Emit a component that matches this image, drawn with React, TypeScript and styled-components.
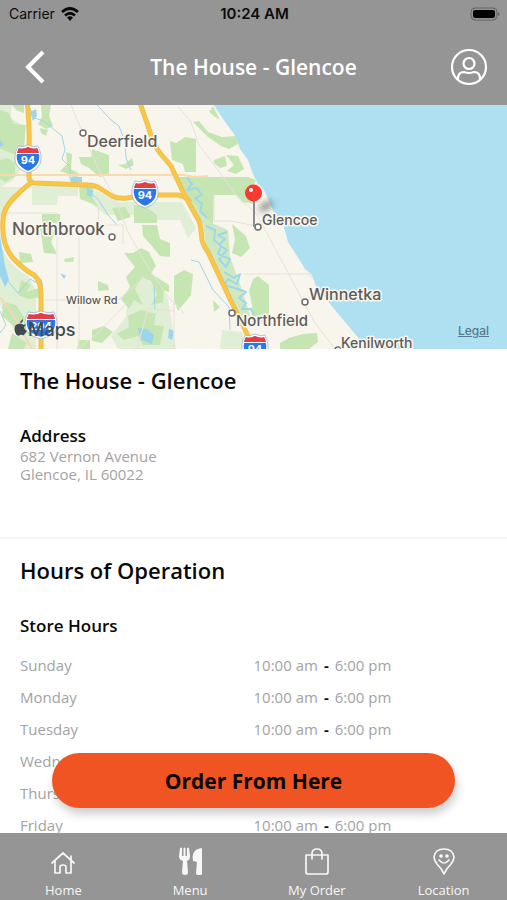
import React from "react";
import styled, { createGlobalStyle } from "styled-components";

const brandFont = `"Open Sans", "Noto Sans", sans-serif`;
const systemFont = `Inter, "Liberation Sans", sans-serif`;

const GlobalStyle = createGlobalStyle`
  *, *::before, *::after { box-sizing: border-box; }
  body { margin: 0; background: #fff; }
`;

const Screen = styled.div`
  height: 100vh;
  display: flex;
  flex-direction: column;
  background: #fff;
  color: #090909;
  font-family: ${brandFont};
`;

const Header = styled.header`
  flex: none;
  background: #959595;
  color: #fff;
`;

const StatusBar = styled.div`
  display: grid;
  grid-template-columns: 1fr auto 1fr;
  align-items: center;
  height: 28px;
  padding: 0 7px 0 9px;
  color: #0c0c0c;
  font: 500 14px/20px ${systemFont};
`;

const Carrier = styled.div`
  display: flex;
  align-items: center;
  gap: 6px;
  font-weight: 400;
`;

const Clock = styled.div`
  font-size: 15px;
  font-weight: 600;
`;

const Battery = styled.svg`
  justify-self: end;
`;

const TitleBar = styled.div`
  display: grid;
  grid-template-columns: 60px 1fr 60px;
  align-items: center;
  height: 77px;
  padding: 0 8px;
`;

const HeaderTitle = styled.h1`
  margin: 0;
  text-align: center;
  font-size: 21px;
  line-height: 28px;
  font-weight: 600;
`;

const IconButton = styled.button`
  display: flex;
  align-items: center;
  justify-content: center;
  height: 56px;
  padding: 0;
  border: 0;
  background: none;
  color: inherit;
  cursor: pointer;
`;

const Body = styled.div`
  flex: 1;
  min-height: 0;
  position: relative;
  display: flex;
  flex-direction: column;
`;

const Content = styled.main`
  flex: 1;
  min-height: 0;
  overflow-y: auto;
  scrollbar-width: none;
`;

const MapPanel = styled.div`
  position: relative;
  height: 244px;
`;

const MapSvg = styled.svg`
  display: block;
  width: 100%;
  height: 100%;
`;

const LegalLink = styled.a`
  position: absolute;
  right: 18px;
  bottom: 11px;
  color: #55798b;
  font: 500 12px/14px ${systemFont};
`;

const Section = styled.section<{ $divided?: boolean }>`
  padding: 16px 20px 54px;
  border-bottom: ${(p) => (p.$divided ? "2px solid #f4f4f4" : "0")};
`;

const SectionTitle = styled.h2`
  margin: 0;
  font-size: 22px;
  line-height: 30px;
  font-weight: 600;
`;

const SubTitle = styled.h3`
  margin: 0;
  padding-top: 30px;
  font-size: 17px;
  line-height: 22px;
  font-weight: 600;
`;

const Address = styled.address`
  color: #a3a3a3;
  font-size: 15px;
  line-height: 18px;
  font-style: normal;
`;

const HoursTable = styled.table`
  width: 100%;
  margin-top: 12px;
  border-collapse: collapse;
  table-layout: fixed;
  color: #a3a3a3;
  font-size: 15px;
  line-height: 20px;

  th, td {
    width: 50%;
    padding: 6px 0;
    text-align: left;
    font-weight: 400;
  }
`;

const Dash = styled.span`
  padding: 0 6px;
  color: #111;
  font-weight: 700;
`;

const OrderButton = styled.button`
  position: absolute;
  left: 52px;
  right: 52px;
  bottom: 25px;
  height: 55px;
  border: 0;
  border-radius: 28px;
  background: #f15423;
  box-shadow: 2px 6px 10px rgba(0, 0, 0, 0.2);
  color: #090909;
  font: 700 21px/30px ${brandFont};
  cursor: pointer;
`;

const TabBar = styled.nav`
  flex: none;
  display: grid;
  grid-template-columns: repeat(4, 1fr);
  background: #959595;
`;

const Tab = styled.a`
  display: flex;
  flex-direction: column;
  align-items: center;
  gap: 4px;
  padding: 14px 0 1px;
  color: #f7f7f7;
  font: 400 13px/18px ${brandFont};
  text-decoration: none;
`;

const TabIcon = styled.svg`
  width: 30px;
  height: 30px;
  fill: none;
  stroke: currentColor;
  stroke-width: 1.7;
  stroke-linecap: round;
  stroke-linejoin: round;
`;

const MapText = styled.text<{ $size?: number }>`
  font: 500 ${(p) => p.$size ?? 15}px ${systemFont};
  fill: #5d5b59;
  stroke: #faf7ef;
  stroke-width: 3px;
  stroke-linejoin: round;
  paint-order: stroke;
`;

const ShieldText = styled.text`
  font: 700 11px ${systemFont};
  fill: #fff;
  text-anchor: middle;
`;

function Shield({ x, y, label, wide }: { x: number; y: number; label: string; wide?: boolean }) {
  const w = wide ? 15 : 12;
  return (
    <g transform={`translate(${x} ${y})`}>
      <path
        d={`M${-w + 2}-12Q${-w / 2}-10 0-13Q${w / 2}-10 ${w - 2}-12Q${w + 2}-3 ${w - 1} 4Q${w - 4} 10 0 13Q${-w + 4} 10 ${-w + 1} 4Q${-w - 2}-3 ${-w + 2}-12Z`}
        fill="#2878e8"
        stroke="#fff"
        strokeWidth="2"
      />
      <path d={`M${-w + 3}-11Q${-w / 2}-9 0-12Q${w / 2}-9 ${w - 3}-11L${w - 1}-6H${-w + 1}Z`} fill="#e63d45" />
      <path d={`M${-w}-5.5H${w}`} stroke="#fff" />
      <path d={`M${-w + 2}-13Q${-w / 2}-11 0-14Q${w / 2}-11 ${w - 2}-13Q${w + 3}-3 ${w} 5Q${w - 3} 11 0 14Q${-w + 3} 11 ${-w} 5Q${-w - 3}-3 ${-w + 2}-13Z`} fill="none" stroke="#94a6bd" strokeWidth=".7" />
      <ShieldText y="5">{label}</ShieldText>
    </g>
  );
}

const places = [
  { name: "Deerfield", x: 87, y: 147, dx: 83, dy: 133, size: 16 },
  { name: "Northbrook", x: 12, y: 235, dx: 112, dy: 237, size: 17 },
  { name: "Glencoe", x: 262, y: 225, dx: 258, dy: 227, size: 14 },
  { name: "Winnetka", x: 309, y: 300, dx: 305, dy: 302, size: 16 },
  { name: "Northfield", x: 236, y: 326, dx: 232, dy: 313, size: 15 },
  { name: "Kenilworth", x: 341, y: 348, dx: 338, dy: 350, size: 14 },
];

const freeways = [
  "M27 100Q30 125 29 150V176Q29 182 34 183L88 185Q95 185 101 189L112 196Q118 199 127 198L146 195H178Q186 196 190 202",
  "M33 182Q27 185 18 194Q3 207 3 220Q1 244 13 258Q23 269 34 275Q41 281 41 294V351",
  "M139 100L148 126Q153 144 160 153L171 166L184 194L199 221Q201 227 202 240Q203 245 208 252L230 299L252 344",
];

function AreaMap() {
  return (
    <MapSvg viewBox="0 105 507 244" preserveAspectRatio="xMidYMid slice" role="img" aria-label="Map around Glencoe">
      <defs>
        <filter id="soft" x="-50%" y="-50%" width="200%" height="200%">
          <feGaussianBlur stdDeviation="3" />
        </filter>
      </defs>
      <path fill="#f8f5ed" d="M-200 0H700V500H-200Z" />
      <g fill="#dfeed5">
        <path d="M0 105H12L10 118 24 126V166L12 181 0 187ZM0 187H22L9 203 0 216ZM0 240Q4 263 28 276L36 290V349H25L0 305ZM32 186H78V196H58L57 205H32ZM80 187L94 190 118 202H182L196 228 188 238 180 220H150L132 215H106L93 205 80 196Z" />
        <path d="M128 295L142 274 158 280 168 300 176 349H118L111 336 126 317ZM222 330L242 332 247 349H220Z" />
      </g>
      <path fill="#cfe8c2" d="M181 192L199 209 214 224 228 230 230 257 240 284 251 318 244 323 222 280 206 246 203 225Z" />
      <g fill="#c5e6b3">
        <path d="M0 110L9 113 14 124 26 125 24 149 14 154 0 149ZM12 105H24V113L16 110ZM0 160L8 158 15 163V176L6 182 0 179ZM41 105H51L49 116 53 126 46 129 38 124 42 117ZM40 128L48 130 46 136 41 133Z" />
        <path d="M92 149L109 155V175L100 177 89 168 81 164 79 157H91ZM66 152L72 154 71 169 78 173 77 182 71 175 60 171 67 164ZM118 165L125 164 132 158 134 165 126 169ZM79 186H94L92 197 98 206 80 199ZM42 214H60V223H42ZM134 205L146 207 157 215V223H134ZM112 208L125 207 131 217 118 221Z" />
        <path d="M176 143L185 137 196 139V172H185L183 164 172 160 170 141ZM193 122L199 121 208 132 222 137 236 136 238 144 229 149 221 146 208 137ZM214 160L225 156 227 166 220 168 214 163ZM226 155L238 156 244 169 236 174 227 171 234 165ZM213 106L220 120 214 116 209 112ZM178 177H215L248 177 256 180 250 193 254 204 243 202 237 195H214L213 224 208 220 199 209 181 192Z" />
        <path d="M40 228L50 226 55 232 51 242 57 254 44 253ZM19 252L31 254 33 262 20 263ZM64 259L74 257 73 262H65ZM98 281L108 285 109 290 98 291ZM21 280L31 285 26 292 42 287V297L29 299 18 295ZM3 302L16 305 25 319 17 329 2 316ZM12 333L27 343 24 349H8Z" />
        <path d="M124 253H133L141 248 149 252 156 266 149 276 156 281 164 284 163 302 151 305 157 295 151 281 142 277 135 289 143 305 134 300 129 309 121 299 130 287 126 277 135 267ZM142 225H157L160 239 170 243V257L160 256 151 245 143 236ZM128 316L141 310 156 314 154 325 164 326 160 345H143L138 336 124 340 117 334 129 327ZM92 330L104 326 113 332 102 343 92 341ZM79 340H90V349H77ZM147 271L169 285V292L154 287ZM174 276L184 270 193 274 191 295 178 311 174 300ZM213 300L220 307 214 312ZM232 224L246 236 250 248 241 257 232 253 235 240ZM253 279L258 276 269 285V322H252V305L249 291ZM280 343L289 338 303 334 317 333 318 342 309 349H280Z" />
      </g>
      <path fill="#aee0f2" d="M214 105L223 119 236 137 240 149 248 160 253 174 258 184 264 190 269 201 274 213 283 224 288 242 297 256 305 269 312 275 317 289 326 299 340 316 360 340 370 349H700V0H214Z" />
      <g fill="none" stroke="#9ed7e9" strokeWidth="2" strokeLinejoin="round">
        <path d="M187 178L192 184 187 190 197 188 202 195 195 198 202 204 200 211 207 218M206 226L215 230 214 240 221 246 218 254 230 259 226 267 219 259 227 250 219 245 225 239 218 235 227 232M224 272L234 278 240 274 237 284 228 279 224 285 238 289 246 292 239 298 246 303 242 309 251 309 255 319" />
        <path strokeWidth="1" d="M30 108L34 118 44 121 57 132 62 136 65 150 62 159 70 167 70 180 80 183 90 193 98 199 108 215 117 225M97 105L110 119 119 126 125 142 126 158 131 170M0 311L6 325 0 333M6 279L18 293 30 279 42 286M191 260L199 262 213 290 229 307 230 330M154 287L155 310" />
      </g>
      <g fill="#9bd5ee">
        <path d="M30 112L36 109 37 116 33 121ZM71 177H82V182H71ZM87 187L93 191 92 197 87 195ZM60 273L66 276 64 279ZM138 328L147 329 154 335 152 344 141 340ZM169 329L174 331 172 340 168 338ZM34 274L42 280 43 286 36 279ZM0 235L5 266 9 280 5 287 0 276ZM0 140L4 145 0 147Z" />
      </g>
      <g fill="none" stroke="#e6e2d9" strokeWidth="1">
        <path d="M71 105L83 134 98 168 113 194 128 232 149 269 168 297 184 313M0 213H57V349M79 225V349M98 207L99 225 123 225V244M41 300H118L139 282M128 302L98 333 80 347M177 105L191 122 199 145 221 174 239 199 256 213 285 267 315 323 335 349M244 274H309L313 279M214 194V221H231L256 226M174 301V349M137 349L148 309 175 311" />
      </g>
      <path d="M0 175H184Q194 178 208 176" fill="none" stroke="#f8dbad" strokeWidth="2" />
      <path d="M0 297L12 313 32 349" fill="none" stroke="#f5d6bd" strokeWidth="2" />
      {freeways.map((d) => (
        <g key={d} fill="none" strokeLinejoin="round">
          <path d={d} stroke="#ebbf55" strokeWidth="5" />
          <path d={d} stroke="#fac745" strokeWidth="3" />
        </g>
      ))}
      <Shield x={28} y={159} label="94" />
      <Shield x={145} y={194} label="94" />
      <Shield x={41} y={325} label="294" wide />
      <Shield x={255} y={348} label="94" />
      <MapText x="66" y="304" $size={11}>Willow Rd</MapText>
      {places.map((p) => (
        <g key={p.name}>
          <circle cx={p.dx} cy={p.dy} r="3" fill="#fff" stroke="#6e6c6a" strokeWidth="1.5" />
          <MapText x={p.x} y={p.y} $size={p.size}>{p.name}</MapText>
        </g>
      ))}
      <ellipse cx="266" cy="206" rx="8" ry="4" transform="rotate(-30 266 206)" fill="#555" opacity=".6" filter="url(#soft)" />
      <path d="M254 200V227" stroke="#8c8c8c" strokeWidth="2" />
      <circle cx="253.5" cy="193" r="8.5" fill="#fb3931" />
      <circle cx="251" cy="190" r="2" fill="#fff" />
      <g fill="#414b4f">
        <path d="M24 325C21 323 18 324 16 325C14 327 14 331 16 334C17 336 19 336 20 335C22 334 23 336 24 335C25 334 26 332 27 331C23 329 24 326 26 325C26 324 25 324 24 325ZM20 323C20 321 22 320 23 319C23 322 22 323 20 323Z" />
        <text x="28" y="336" fontFamily={systemFont} fontSize="18" fontWeight="500">Maps</text>
      </g>
    </MapSvg>
  );
}

const days = ["Sunday", "Monday", "Tuesday", "Wednesday", "Thursday", "Friday", "Saturday"];

const tabs = [
  { label: "Home", icon: <path d="M4 16L15 6 26 16M7 14V26H12V20Q12 18 15 18Q18 18 18 20V26H23V14M23 13V9" /> },
  {
    label: "Menu",
    icon: (
      <g fill="currentColor" stroke="none">
        <path d="M5 1Q6 0 7 1V9H8.5V1Q9.5 0 10.5 1V9H12V1Q13 0 14 1L15 9Q15 13 12 14L13 25Q13 28 10 28Q7 28 7 25L8 14Q4 13 4 9Z" />
        <path d="M27 1V27Q27 28 25 28H23Q21 28 21 26L22 15L18 14Q16 2 27 1Z" />
      </g>
    ),
  },
  { label: "My Order", icon: <path d="M4 8H26V25Q26 27 24 27H6Q4 27 4 25ZM10 12V7Q10 2 15 2Q20 2 20 7V12" /> },
  {
    label: "Location",
    icon: (
      <>
        <path d="M15 27Q13 22 8 17Q5 13 5 10Q6 2 15 2Q24 2 25 10Q25 13 22 17Q17 22 15 27ZM10 13Q15 19 20 13" />
        <circle cx="12" cy="9" r="1" fill="currentColor" />
        <circle cx="18" cy="9" r="1" fill="currentColor" />
      </>
    ),
  },
];

export default function App() {
  return (
    <Screen>
      <GlobalStyle />
      <Header>
        <StatusBar>
          <Carrier>
            Carrier
            <svg width="18" height="14" viewBox="0 0 18 14" fill="none" stroke="#090909" strokeWidth="2.7" aria-hidden="true">
              <path d="M1 5Q9-2 17 5M4 8.5Q9 4 14 8.5" />
              <path d="M6 10.5Q9 8 12 10.5L9 14Z" fill="#090909" stroke="none" />
            </svg>
          </Carrier>
          <Clock>10:24 AM</Clock>
          <Battery width="30" height="14" viewBox="0 0 30 14" aria-label="Battery full">
            <rect x="1" y="1" width="26" height="12" rx="4" fill="none" stroke="#626262" />
            <rect x="3" y="3" width="22" height="8" rx="2" fill="#000" />
            <path d="M28 5Q31 7 28 9Z" fill="#626262" />
          </Battery>
        </StatusBar>
        <TitleBar>
          <IconButton aria-label="Back">
            <svg width="32" height="36" viewBox="0 0 32 36" fill="none" stroke="currentColor" strokeWidth="4">
              <path d="M21 3L6 18L21 33" />
            </svg>
          </IconButton>
          <HeaderTitle>The House - Glencoe</HeaderTitle>
          <IconButton aria-label="Profile">
            <svg width="38" height="38" viewBox="0 0 38 38" fill="none" stroke="currentColor" strokeWidth="2.2">
              <circle cx="19" cy="19" r="17" />
              <circle cx="19" cy="15.5" r="5.5" />
              <path d="M8 31Q8 24 14 24Q19 26 24 24Q30 24 30 31" />
            </svg>
          </IconButton>
        </TitleBar>
      </Header>
      <Body>
        <Content>
          <MapPanel>
            <AreaMap />
            <LegalLink href="#legal">Legal</LegalLink>
          </MapPanel>
          <Section $divided>
            <SectionTitle>The House - Glencoe</SectionTitle>
            <SubTitle>Address</SubTitle>
            <Address>
              682 Vernon Avenue
              <br />
              Glencoe, IL 60022
            </Address>
          </Section>
          <Section>
            <SectionTitle>Hours of Operation</SectionTitle>
            <SubTitle>Store Hours</SubTitle>
            <HoursTable>
              <tbody>
                {days.map((day) => (
                  <tr key={day}>
                    <th scope="row">{day}</th>
                    <td>
                      10:00 am<Dash>-</Dash>6:00 pm
                    </td>
                  </tr>
                ))}
              </tbody>
            </HoursTable>
          </Section>
        </Content>
        <OrderButton>Order From Here</OrderButton>
      </Body>
      <TabBar>
        {tabs.map((tab) => (
          <Tab key={tab.label} href={`#${tab.label}`}>
            <TabIcon viewBox="0 0 30 30" aria-hidden="true">{tab.icon}</TabIcon>
            {tab.label}
          </Tab>
        ))}
      </TabBar>
    </Screen>
  );
}
